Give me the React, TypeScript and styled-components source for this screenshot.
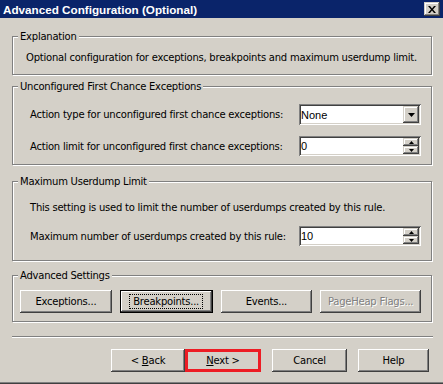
import styled, { createGlobalStyle } from "styled-components";

const GlobalStyle = createGlobalStyle`
  html, body {
    margin: 0;
    padding: 0;
    background: #d4d0c8;
  }
  body {
    font-family: "DejaVu Sans", sans-serif;
    font-size: 10px;
    letter-spacing: -0.23px;
    color: #000;
  }
`;

const Window = styled.div`
  width: 443px;
  height: 384px;
  box-sizing: border-box;
  background: #d4d0c8;
  display: flex;
  flex-direction: column;
  box-shadow: inset 0 -1px 0 #404040, inset 0 -2px 0 #808080;
`;

const TitleBar = styled.div`
  height: 18px;
  background: #0a246a;
  display: flex;
  align-items: center;
  justify-content: space-between;
  padding: 0 3px 0 3px;
`;

const Title = styled.span`
  color: #fff;
  font-family: "Liberation Sans", Arial, sans-serif;
  font-weight: bold;
  font-size: 11.7px;
  letter-spacing: 0;
`;

const CloseButton = styled.div`
  width: 16px;
  height: 14px;
  box-sizing: border-box;
  background: #d4d0c8;
  display: flex;
  align-items: center;
  justify-content: center;
  box-shadow: inset -1px -1px 0 #404040, inset 1px 1px 0 #d4d0c8,
    inset -2px -2px 0 #808080, inset 2px 2px 0 #fff;
`;

const Body = styled.div`
  padding: 0 11px 0 12px;
  display: flex;
  flex-direction: column;
`;

const GroupBox = styled.div<{ $h: number; $mt: number }>`
  position: relative;
  box-sizing: border-box;
  height: ${(p) => p.$h}px;
  margin-top: ${(p) => p.$mt}px;
  border: 1px solid #808080;
  box-shadow: inset 1px 1px 0 #fff, 1px 1px 0 #fff;
`;

const Legend = styled.span`
  position: absolute;
  top: -7px;
  left: 5px;
  padding: 0 2px;
  line-height: 13px;
  white-space: nowrap;
  background: #d4d0c8;
`;

const GroupInner = styled.div<{ $pt: number; $px: number; $gap: number }>`
  display: flex;
  flex-direction: column;
  padding: ${(p) => p.$pt}px 10px 0 ${(p) => p.$px}px;
  gap: ${(p) => p.$gap}px;
`;

const Text = styled.div`
  line-height: 13px;
  white-space: nowrap;
`;

const Row = styled.div`
  display: flex;
  align-items: center;
  justify-content: space-between;
`;

const Field = styled.div<{ $h: number }>`
  width: 122px;
  height: ${(p) => p.$h}px;
  box-sizing: border-box;
  background: #fff;
  display: flex;
  align-items: center;
  justify-content: space-between;
  padding: 2px;
  box-shadow: inset 1px 1px 0 #808080, inset -1px -1px 0 #fff,
    inset 2px 2px 0 #404040, inset -2px -2px 0 #d4d0c8;
`;

const FieldValue = styled.span`
  padding-left: 0;
  font-family: "Liberation Sans", Arial, sans-serif;
  font-size: 11px;
  letter-spacing: 0;
`;

const raised = `
  background: #d4d0c8;
  box-shadow: inset -1px -1px 0 #404040, inset 1px 1px 0 #d4d0c8,
    inset -2px -2px 0 #808080, inset 2px 2px 0 #fff;
`;

const DropButton = styled.div`
  ${raised}
  width: 16px;
  height: 17px;
  display: flex;
  align-items: center;
  justify-content: center;
`;

const SpinStack = styled.div`
  display: flex;
  flex-direction: column;
  height: 100%;
`;

const SpinButton = styled.div`
  ${raised}
  width: 16px;
  flex: 1;
  display: flex;
  align-items: center;
  justify-content: center;
`;

const ButtonRow = styled.div<{ $gap: number; $pr: number; $justify: string }>`
  display: flex;
  gap: ${(p) => p.$gap}px;
  justify-content: ${(p) => p.$justify};
  padding-right: ${(p) => p.$pr}px;
`;

const Button = styled.div<{
  $w: number;
  $ml?: number;
  $default?: boolean;
  $disabled?: boolean;
  $mark?: boolean;
}>`
  position: relative;
  width: ${(p) => p.$w}px;
  height: 23px;
  margin-left: ${(p) => p.$ml ?? 0}px;
  box-sizing: border-box;
  background: #d4d0c8;
  display: flex;
  align-items: center;
  justify-content: center;
  white-space: nowrap;
  color: ${(p) => (p.$disabled ? "#808080" : "#000")};
  text-shadow: ${(p) => (p.$disabled ? "1px 1px 0 #fff" : "none")};
  border: ${(p) => (p.$default ? "1px solid #000" : "none")};
  box-shadow: inset -1px -1px 0 #404040, inset 1px 1px 0 #fff,
    inset -2px -2px 0 #808080, inset 2px 2px 0 #d4d0c8;
  outline: ${(p) => (p.$mark ? "3px solid #ed1c24" : "none")};
  outline-offset: -3px;
`;

const FocusRect = styled.span`
  padding: 1px 3px;
  border: 1px dotted #000;
`;

const Separator = styled.div`
  height: 2px;
  margin-top: 14px;
  margin-right: -1px;
  border-top: 1px solid #808080;
  border-bottom: 1px solid #fff;
  box-sizing: border-box;
`;

const Footer = styled.div`
  margin-top: 11px;
`;

const DownArrow = ({ w }: { w: number }) => (
  <svg width={w} height={Math.ceil(w / 2)} viewBox={`0 0 ${w} ${Math.ceil(w / 2)}`}>
    <polygon points={`0,0 ${w},0 ${w / 2},${Math.ceil(w / 2)}`} fill="#000" />
  </svg>
);

const UpArrow = ({ w }: { w: number }) => (
  <svg width={w} height={Math.ceil(w / 2)} viewBox={`0 0 ${w} ${Math.ceil(w / 2)}`}>
    <polygon points={`0,${Math.ceil(w / 2)} ${w},${Math.ceil(w / 2)} ${w / 2},0`} fill="#000" />
  </svg>
);

const Spin = ({ value }: { value: string }) => (
  <Field $h={20}>
    <FieldValue>{value}</FieldValue>
    <SpinStack>
      <SpinButton>
        <UpArrow w={5} />
      </SpinButton>
      <SpinButton>
        <DownArrow w={5} />
      </SpinButton>
    </SpinStack>
  </Field>
);

export default function App() {
  return (
    <>
      <GlobalStyle />
      <Window>
        <TitleBar>
          <Title>Advanced Configuration (Optional)</Title>
          <CloseButton>
            <svg width="8" height="7" viewBox="0 0 8 7">
              <path d="M0 0 L2 0 L4 2.5 L6 0 L8 0 L5 3.5 L8 7 L6 7 L4 4.5 L2 7 L0 7 L3 3.5 Z" fill="#000" />
            </svg>
          </CloseButton>
        </TitleBar>
        <Body>
          <GroupBox $h={39} $mt={18}>
            <Legend>Explanation</Legend>
            <GroupInner $pt={14} $px={13} $gap={0}>
              <Text>Optional configuration for exceptions, breakpoints and maximum userdump limit.</Text>
            </GroupInner>
          </GroupBox>

          <GroupBox $h={79} $mt={11}>
            <Legend>Unconfigured First Chance Exceptions</Legend>
            <GroupInner $pt={17} $px={17} $gap={11}>
              <Row>
                <Text>Action type for unconfigured first chance exceptions:</Text>
                <Field $h={21}>
                  <FieldValue>None</FieldValue>
                  <DropButton>
                    <DownArrow w={7} />
                  </DropButton>
                </Field>
              </Row>
              <Row>
                <Text>Action limit for unconfigured first chance exceptions:</Text>
                <Spin value="0" />
              </Row>
            </GroupInner>
          </GroupBox>

          <GroupBox $h={80} $mt={16}>
            <Legend>Maximum Userdump Limit</Legend>
            <GroupInner $pt={19} $px={17} $gap={12}>
              <Text>This setting is used to limit the number of userdumps created by this rule.</Text>
              <Row>
                <Text>Maximum number of userdumps created by this rule:</Text>
                <Spin value="10" />
              </Row>
            </GroupInner>
          </GroupBox>

          <GroupBox $h={47} $mt={14}>
            <Legend>Advanced Settings</Legend>
            <GroupInner $pt={14} $px={7} $gap={0}>
              <ButtonRow $gap={8} $pr={0} $justify="flex-start">
                <Button $w={92}>Exceptions...</Button>
                <Button $w={93} $default>
                  <FocusRect>Breakpoints...</FocusRect>
                </Button>
                <Button $w={92}>Events...</Button>
                <Button $w={101} $disabled>
                  PageHeap Flags...
                </Button>
              </ButtonRow>
            </GroupInner>
          </GroupBox>

          <Separator />

          <Footer>
            <ButtonRow $gap={0} $pr={3} $justify="flex-end">
              <Button $w={74}>
                &lt;&nbsp;<u>B</u>ack
              </Button>
              <Button $w={76} $mark>
                <u>N</u>ext &gt;
              </Button>
              <Button $w={75} $ml={11}>
                Cancel
              </Button>
              <Button $w={71} $ml={11}>
                Help
              </Button>
            </ButtonRow>
          </Footer>
        </Body>
      </Window>
    </>
  );
}
